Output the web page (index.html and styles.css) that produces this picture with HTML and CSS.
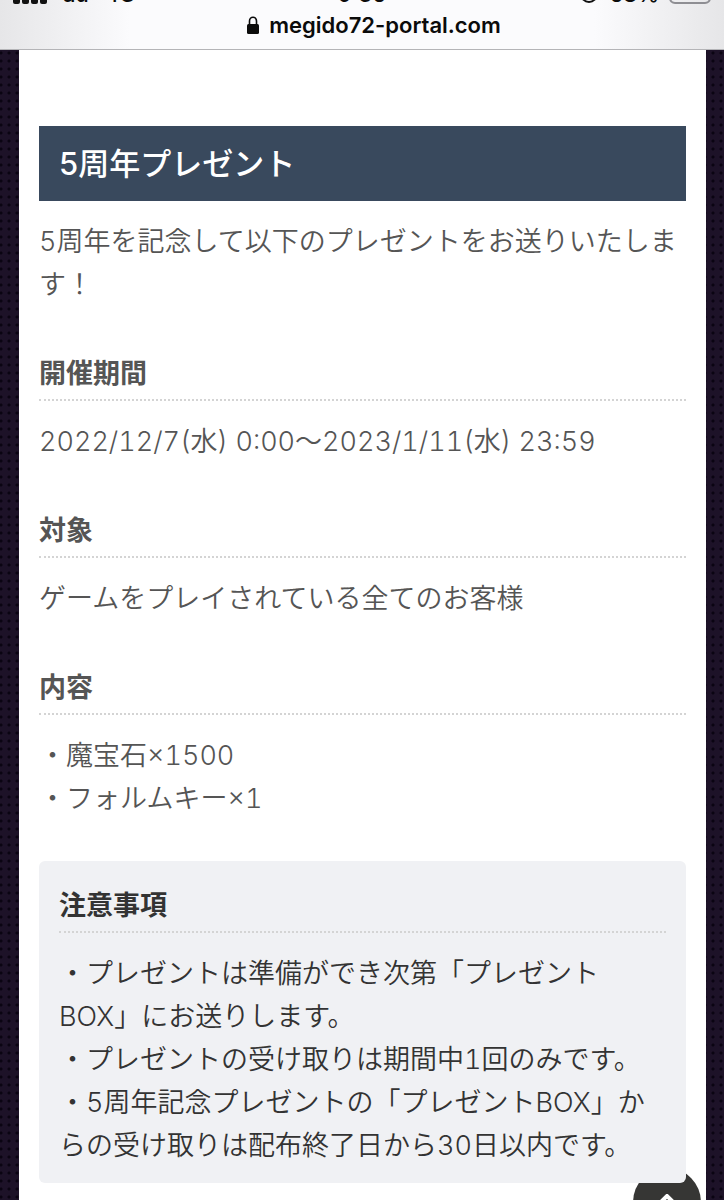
FILE: index.html
```
<!DOCTYPE html>
<html lang="ja">
<head>
    <meta charset="UTF-8">
    <meta name="viewport" content="width=device-width, initial-scale=1.0">
    <title>5周年プレゼント</title>
    <link rel="stylesheet" href="styles.css">
</head>
<body>

<header class="browser-bar">
    <div class="status">
        <div class="status-left">
            <svg class="signal" width="34" height="20" viewBox="0 0 34 20" aria-hidden="true">
                <rect x="0" y="12" width="7" height="8" rx="2"/>
                <rect x="9" y="9" width="7" height="11" rx="2"/>
                <rect x="18" y="5" width="7" height="15" rx="2"/>
                <rect x="27" y="0" width="7" height="20" rx="2"/>
            </svg>
            <span>au</span>
            <span>4G</span>
        </div>
        <span>9:36</span>
        <div class="status-right">
            <svg width="20" height="20" viewBox="0 0 20 20" aria-hidden="true">
                <circle cx="10" cy="10" r="8" fill="none" stroke="#111" stroke-width="2"/>
            </svg>
            <span>68%</span>
            <svg width="42" height="20" viewBox="0 0 42 20" aria-hidden="true">
                <rect x="1" y="1" width="40" height="18" rx="5" fill="none" stroke="#8e8e93" stroke-width="2"/>
            </svg>
        </div>
    </div>
    <div class="address">
        <svg width="12" height="18" viewBox="0 0 12 18" aria-hidden="true">
            <path d="M2.5 9V5a3.5 3.8 0 0 1 7 0v4" fill="none" stroke="#0b0b0b" stroke-width="1.6"/>
            <rect x="0" y="8" width="12" height="10" rx="1.5" fill="#0b0b0b"/>
        </svg>
        <span>megido72-portal.com</span>
    </div>
</header>

<main class="container">
    <h1 class="title">5周年プレゼント</h1>
    <p>5周年を記念して以下のプレゼントをお送りいたします！</p>

    <h2>開催期間</h2>
    <p>2022/12/7(水) 0:00〜2023/1/11(水) 23:59</p>

    <h2>対象</h2>
    <p>ゲームをプレイされている全てのお客様</p>

    <h2>内容</h2>
    <p>・魔宝石×1500<br>・フォルムキー×1</p>

    <section class="notice">
        <h2>注意事項</h2>
        <p>・プレゼントは準備ができ次第「プレゼントBOX」にお送りします。<br>
        ・プレゼントの受け取りは期間中1回のみです。<br>
        ・5周年記念プレゼントの「プレゼントBOX」からの受け取りは配布終了日から30日以内です。</p>
    </section>
</main>

<a class="page-top" href="#" aria-label="ページの先頭へ">
    <svg width="24" height="14" viewBox="0 0 24 14" aria-hidden="true">
        <path d="M2 12L12 2l10 10" fill="none" stroke="#fff" stroke-width="4"/>
    </svg>
</a>

</body>
</html>
```

FILE: styles.css
```
* {
    box-sizing: border-box;
}

body {
    margin: 0;
    min-height: 100vh;
    font-family: Inter, "Noto Sans CJK JP", sans-serif;
    font-size: 27px;
    font-weight: 350;
    line-height: 43px;
    color: #555;
    background-color: #1d1228;
    background-image: radial-gradient(circle, #0a0412 1px, transparent 2px);
    background-size: 8px 8px;
    background-position: 5px 1px;
}

/* Browser bar */
.browser-bar {
    overflow: hidden;
    color: #0b0b0b;
    background: linear-gradient(to right, #e6e6e8, #fbfbfd 18%, #fbfbfd 82%, #e6e6e8);
    border-bottom: 1px solid #b4b4b7;
}

.status {
    display: grid;
    grid-template-columns: 1fr auto 1fr;
    align-items: center;
    height: 28px;
    margin-top: -20px;
    padding: 0 13px;
    font-size: 22px;
    font-weight: 500;
    line-height: 28px;
}

.status-left,
.status-right {
    display: flex;
    align-items: center;
    gap: 10px;
}

.status-left {
    gap: 16px;
}

.status-right {
    justify-content: flex-end;
}

.signal {
    fill: #111;
}

.address {
    display: flex;
    justify-content: center;
    align-items: center;
    gap: 10px;
    height: 41px;
    padding-bottom: 8px;
    padding-left: 24px;
    font-size: 22px;
    font-weight: 600;
    line-height: 30px;
}

/* Article */
.container {
    margin: 0 18px 0 19px;
    padding: 76px 20px 17px;
    background-color: #fff;
}

.title {
    margin: 0 0 19px;
    padding: 16px 20px;
    font-size: 31px;
    font-weight: 500;
    color: #fff;
    background-color: #39495d;
}

h2 {
    margin: 46px 0 19px;
    padding-bottom: 4px;
    font-size: 27px;
    font-weight: 700;
    border-bottom: 2px dotted #d4d4d4;
}

p {
    margin: 0;
    font-variant-numeric: tabular-nums;
}

.notice {
    position: relative;
    z-index: 1;
    margin-top: 41px;
    padding: 23px 20px 16px;
    color: #333;
    background-color: #f0f1f4;
    border-radius: 6px;
}

.notice h2 {
    margin-top: 0;
}

/* Back to top, slides under the notice box */
.page-top {
    position: fixed;
    right: 23px;
    bottom: -36px;
    display: flex;
    justify-content: center;
    padding-top: 26px;
    width: 68px;
    height: 68px;
    border-radius: 50%;
    background-color: #363634;
}
```
